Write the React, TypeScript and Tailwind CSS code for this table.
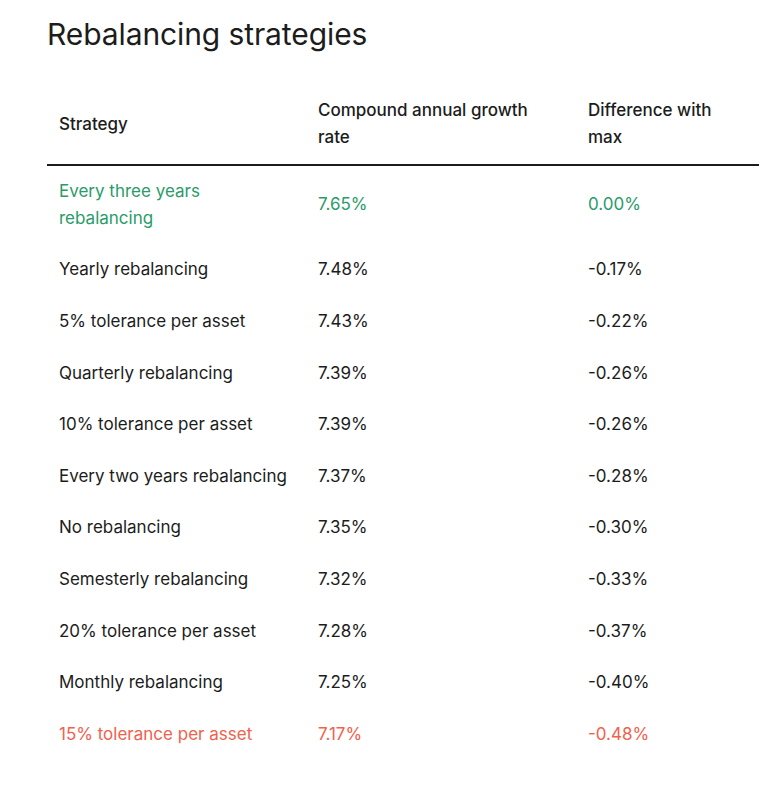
const rows = [
  { name: 'Every three years rebalancing', cagr: '7.65%', diff: '0.00%', tone: 'best' },
  { name: 'Yearly rebalancing', cagr: '7.48%', diff: '-0.17%' },
  { name: '5% tolerance per asset', cagr: '7.43%', diff: '-0.22%' },
  { name: 'Quarterly rebalancing', cagr: '7.39%', diff: '-0.26%' },
  { name: '10% tolerance per asset', cagr: '7.39%', diff: '-0.26%' },
  { name: 'Every two years rebalancing', cagr: '7.37%', diff: '-0.28%' },
  { name: 'No rebalancing', cagr: '7.35%', diff: '-0.30%' },
  { name: 'Semesterly rebalancing', cagr: '7.32%', diff: '-0.33%' },
  { name: '20% tolerance per asset', cagr: '7.28%', diff: '-0.37%' },
  { name: 'Monthly rebalancing', cagr: '7.25%', diff: '-0.40%' },
  { name: '15% tolerance per asset', cagr: '7.17%', diff: '-0.48%', tone: 'worst' },
];

export default function App() {
  return (
    <div className="min-h-screen bg-white pl-[47px] pt-[14px] text-[#1c1c1c] font-['Inter',sans-serif]">
      <h1 className="text-[30px] leading-[40px] font-normal tracking-[-0.1px]">Rebalancing strategies</h1>

      <table className="mt-[31px] w-[712px] border-collapse text-left text-[17px] leading-[27px]">
        <thead>
          <tr className="border-b-2 border-[#1c1c1c]">
            <th className="w-[259px] px-3 py-[12.3px] align-middle font-medium">Strategy</th>
            <th className="w-[270px] px-3 py-[12.3px] align-middle font-medium">
              <span className="block w-[228px]">Compound annual growth rate</span>
            </th>
            <th className="px-3 py-[12.3px] align-middle font-medium">
              <span className="block w-[135px]">Difference with max</span>
            </th>
          </tr>
        </thead>
        <tbody>
          {rows.map((r) => {
            const color =
              r.tone === 'best' ? 'text-[#2a9b6a]' : r.tone === 'worst' ? 'text-[#f2614c]' : 'text-[#1c1c1c]';
            return (
              <tr key={r.name} className={color}>
                <td className="px-3 py-[12.3px] align-middle">
                  {r.tone === 'best' ? <span className="block w-[170px]">{r.name}</span> : r.name}
                </td>
                <td className="px-3 py-[12.3px] align-middle">{r.cagr}</td>
                <td className="px-3 py-[12.3px] align-middle">{r.diff}</td>
              </tr>
            );
          })}
        </tbody>
      </table>
    </div>
  );
}
